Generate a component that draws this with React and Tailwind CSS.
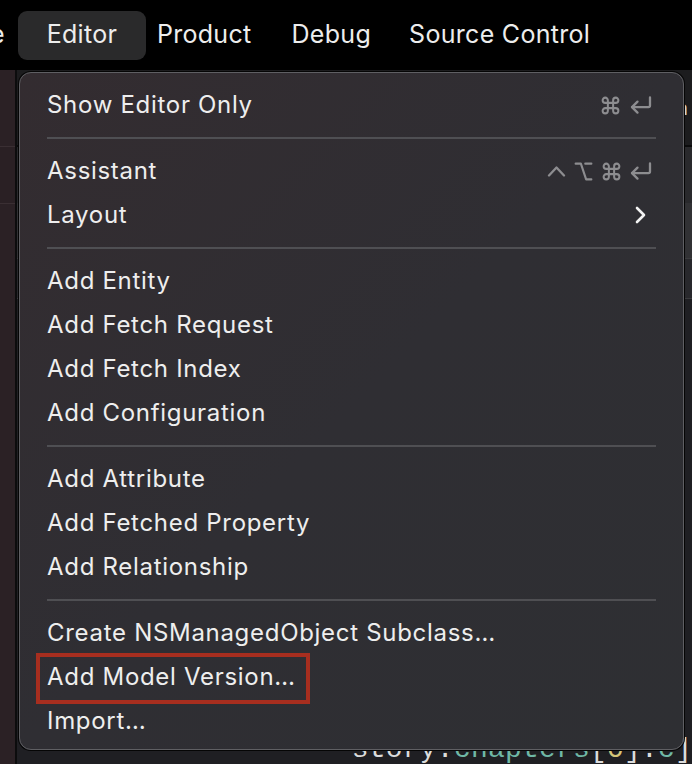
import { Command, Option } from 'lucide-react';

const SANS = "font-['Inter','Noto_Sans',sans-serif]";
const MONO = "font-['Liberation_Mono','DejaVu_Sans_Mono',monospace]";

function ReturnKey() {
  return (
    <svg width="23" height="19" viewBox="0 0 23 19" fill="none" stroke="#8d8d90" strokeWidth="2.3" strokeLinecap="round" strokeLinejoin="round">
      <path d="M21 1.5v8q0 1.6-1.6 1.6H3" />
      <path d="M8.5 5.6 3 11.1l5.5 5.5" />
    </svg>
  );
}

function ControlKey() {
  return (
    <svg width="19" height="12" viewBox="0 0 19 12" fill="none" stroke="#8d8d90" strokeWidth="2.3" strokeLinecap="round" strokeLinejoin="round">
      <path d="M2 10.5 9.5 2.5l7.5 8" />
    </svg>
  );
}

function Chevron() {
  return (
    <svg width="13" height="18" viewBox="0 0 13 18" fill="none" stroke="#f2f2f2" strokeWidth="2.6" strokeLinecap="round" strokeLinejoin="round">
      <path d="M3 2l7 7-7 7" />
    </svg>
  );
}

function Item({ label, right, highlighted }) {
  return (
    <div className="relative h-[44px] flex items-center pl-[27px] pr-[31px]">
      {highlighted && (
        <div className="absolute left-[16px] top-[-2px] w-[274px] h-[51px] border-[4px] border-[#a72e1f]" />
      )}
      <span className="flex-1 text-[24px] text-[#eeeeee] tracking-[0.7px] whitespace-nowrap">{label}</span>
      {right}
    </div>
  );
}

function Sep() {
  return (
    <div className="h-[22px] flex items-center px-[27px]">
      <div className="h-[2px] w-full bg-[#4f4f53]" />
    </div>
  );
}

// strip of the code editor that shows to the right of the menu
const rows = [
  { h: 75, bg: 'bg-[#1c1c1e]', text: 'ea', cls: `${SANS} text-[20px] text-[#d4d4d4] ml-[648px]` },
  { h: 2, bg: 'bg-[#0b0b0c]' },
  { h: 56, bg: 'bg-[#29292c]' },
  { h: 55, bg: 'bg-[#313134]', text: 'F', cls: `${SANS} text-[18px] text-[#9a9a9c] ml-[654px]` },
  { h: 1, bg: 'bg-[#3b3b3e]' },
  { h: 39, bg: 'bg-[#28282c]', text: 'C', cls: `${MONO} text-[28px] text-[#6dc0e6] ml-[652px]` },
  { h: 1, bg: 'bg-[#3a3a3d]' },
  { h: 38, text: 'm', cls: `${MONO} text-[28px] text-[#5eaacb] ml-[652px]` },
  { h: 90 },
  { h: 36, text: 'h', cls: `${MONO} text-[28px] text-[#dcdcdc] ml-[652px]` },
  { h: 64 },
  { h: 36, text: 'i', cls: `${MONO} text-[28px] text-[#6fb8a6] ml-[652px]` },
  { h: 19 },
  { h: 35, text: 's', cls: `${MONO} text-[28px] text-[#6fb8a6] ml-[652px]` },
  { h: 36, text: 'e', cls: `${MONO} text-[28px] text-[#6fb8a6] ml-[652px]` },
  { h: 39 },
  { h: 36, text: 'h', cls: `${MONO} text-[28px] text-[#dcdcdc] ml-[652px]` },
  { h: 4 },
];

export default function App() {
  return (
    <div className={`w-[692px] h-[764px] relative overflow-hidden bg-[#1f1f23] ${SANS}`}>
      {/* menu bar */}
      <div className="h-[70px] bg-black flex items-center text-[25px] tracking-[0.3px] text-[#ededed] whitespace-nowrap">
        <span className="ml-[-10px]">e</span>
        <div className="ml-[13px] w-[128px] h-[49px] rounded-[9px] bg-[#2a2a2b] flex items-center justify-center">Editor</div>
        <span className="ml-[11px]">Product</span>
        <span className="ml-[40px]">Debug</span>
        <span className="ml-[38px]">Source Control</span>
      </div>

      {/* window behind the menu */}
      <div className="flex h-[694px]">
        <div className="w-[28px] flex flex-col bg-[#2b2125]">
          <div className="h-[76px]" />
          <div className="h-[1px] bg-[#3a2f33]" />
          <div className="h-[56px] bg-[#2a2024]" />
          <div className="h-[1px] bg-[#3a2f33]" />
        </div>
        <div className="w-[3px] bg-[#0c0c0d]" />
        <div className="flex-1 flex flex-col">
          {rows.map((r, i) => (
            <div key={i} style={{ height: r.h }} className={`shrink-0 flex items-center whitespace-nowrap ${r.bg || ''}`}>
              {r.text && <span className={r.cls}>{r.text}</span>}
            </div>
          ))}
          <div className={`h-[36px] shrink-0 flex items-center whitespace-nowrap ${MONO} text-[28px] tracking-[0.2px] ml-[335px]`}>
            <span className="text-[#dcdcdc]">story.</span>
            <span className="text-[#6fb8a6]">chapters</span>
            <span className="text-[#dcdcdc]">[</span>
            <span className="text-[#d6c77a]">0</span>
            <span className="text-[#dcdcdc]">].</span>
            <span className="text-[#6fb8a6]">c</span>
            <span className="text-[#dcdcdc]">]</span>
          </div>
        </div>
      </div>

      {/* Editor menu */}
      <div className="absolute left-[19px] top-[72px] w-[665px] h-[678px] rounded-[12px] border border-[#5f5f63] shadow-[0_0_0_1px_#050505] bg-linear-to-br from-[#332c30] via-[#2f2e33] to-[#2e2f33] pt-[10px]">
        <Item
          label="Show Editor Only"
          right={
            <div className="flex items-center gap-[8px]">
              <Command size={21} color="#8d8d90" strokeWidth={2.3} />
              <ReturnKey />
            </div>
          }
        />
        <Sep />
        <Item
          label="Assistant"
          right={
            <div className="flex items-center gap-[7px]">
              <ControlKey />
              <Option size={21} color="#8d8d90" strokeWidth={2.4} />
              <Command size={21} color="#8d8d90" strokeWidth={2.3} />
              <ReturnKey />
            </div>
          }
        />
        <Item label="Layout" right={<div className="mr-[5px]"><Chevron /></div>} />
        <Sep />
        <Item label="Add Entity" />
        <Item label="Add Fetch Request" />
        <Item label="Add Fetch Index" />
        <Item label="Add Configuration" />
        <Sep />
        <Item label="Add Attribute" />
        <Item label="Add Fetched Property" />
        <Item label="Add Relationship" />
        <Sep />
        <Item label="Create NSManagedObject Subclass…" />
        <Item label="Add Model Version…" highlighted />
        <Item label="Import…" />
      </div>
    </div>
  );
}
